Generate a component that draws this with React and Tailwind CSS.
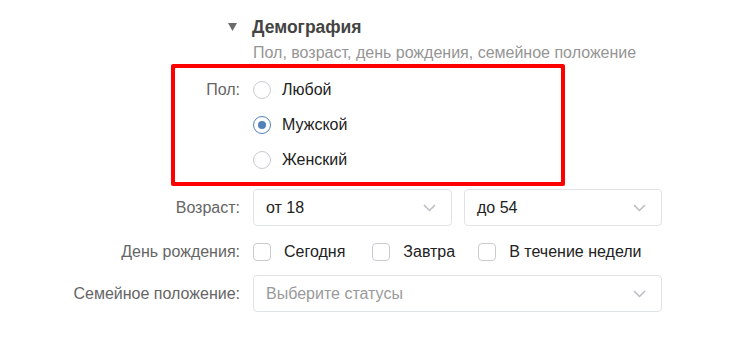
import React from 'react';

const Chevron = () => (
  <svg width="13" height="8" viewBox="0 0 13 8" className="shrink-0">
    <polyline points="1,1 6.5,6.5 12,1" fill="none" stroke="#b9bcc0" strokeWidth="1.5" />
  </svg>
);

const Select = ({ value, placeholder, className = '' }) => (
  <div className={`h-[37px] flex items-center justify-between pl-[12px] pr-[15px] border border-[#dfe2e6] rounded-[4px] bg-white ${className}`}>
    <span className={value ? 'text-[#222]' : 'text-[#9a9a9a]'}>{value || placeholder}</span>
    <Chevron />
  </div>
);

const Radio = ({ checked, label }) => (
  <div className="h-[35px] flex items-center gap-[11px]">
    <span
      className={`w-[18px] h-[18px] rounded-full border flex items-center justify-center ${
        checked ? 'border-[#5181b8]' : 'border-[#c8ccd1]'
      }`}
    >
      {checked && <span className="w-[8px] h-[8px] rounded-full bg-[#5181b8]" />}
    </span>
    <span className="text-[#222]">{label}</span>
  </div>
);

const Check = ({ label, className = '' }) => (
  <div className={`flex items-center gap-[13px] ${className}`}>
    <span className="w-[18px] h-[18px] rounded-[4px] border border-[#c8ccd1] bg-white" />
    <span className="text-[#222]">{label}</span>
  </div>
);

export default function App() {
  return (
    <div className="relative w-[744px] h-[341px] bg-white overflow-hidden font-['Liberation_Sans',Arial,sans-serif] text-[16px] leading-[20px]">
      <div className="pt-[15px] grid grid-cols-[240px_409px] gap-x-[13px]">
        {/* header */}
        <div className="h-[24px] flex items-center justify-end pr-[3px]">
          <svg width="9" height="8" viewBox="0 0 9 8">
            <polygon points="0,0 9,0 4.5,8" fill="#6b6b6b" />
          </svg>
        </div>
        <div className="h-[24px] flex items-center text-[17.5px] font-bold text-[#444] -ml-[1px]">Демография</div>

        <div className="mt-[4px]" />
        <div className="mt-[4px] text-[#959595] whitespace-nowrap">Пол, возраст, день рождения, семейное положение</div>

        {/* gender */}
        <div className="mt-[9px] h-[35px] flex items-center justify-end text-[#656565]">Пол:</div>
        <div className="mt-[9px] flex flex-col">
          <Radio label="Любой" />
          <Radio checked label="Мужской" />
          <Radio label="Женский" />
        </div>

        {/* age */}
        <div className="mt-[12px] h-[37px] flex items-center justify-end text-[#656565]">Возраст:</div>
        <div className="mt-[12px] flex gap-[12px]">
          <Select value="от 18" className="w-[199px]" />
          <Select value="до 54" className="w-[198px]" />
        </div>

        {/* birthday */}
        <div className="mt-[16px] h-[20px] flex items-center justify-end text-[#656565]">День рождения:</div>
        <div className="mt-[16px] h-[20px] flex items-center">
          <Check label="Сегодня" className="mr-[27px]" />
          <Check label="Завтра" className="mr-[23px]" />
          <Check label="В течение недели" />
        </div>

        {/* marital */}
        <div className="mt-[13px] h-[37px] flex items-center justify-end text-[#656565] whitespace-nowrap">Семейное положение:</div>
        <div className="mt-[13px]">
          <Select placeholder="Выберите статусы" />
        </div>
      </div>

      {/* annotation */}
      <div className="absolute left-[171px] top-[64px] w-[394px] h-[122px] border-[4px] border-[#ff0000] rounded-[2px] pointer-events-none" />
    </div>
  );
}
